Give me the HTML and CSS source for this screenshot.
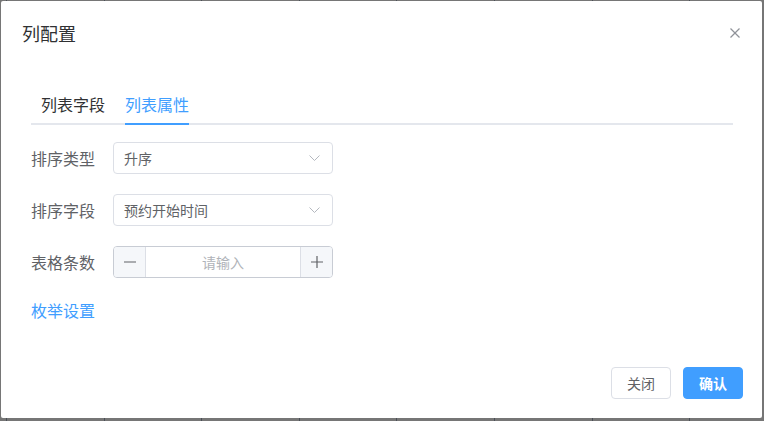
FILE: index.html
```html
<!DOCTYPE html>
<html lang="zh-CN">
<head>
    <meta charset="UTF-8">
    <title>列配置</title>
    <link rel="stylesheet" href="styles.css">
</head>
<body>
    <div class="dialog">
        <div class="dialog-header">
            <span class="dialog-title">列配置</span>
            <button class="dialog-close" aria-label="关闭">
                <svg width="10" height="10" viewBox="0 0 10 10">
                    <line x1="0.5" y1="0.5" x2="9.5" y2="9.5"></line>
                    <line x1="9.5" y1="0.5" x2="0.5" y2="9.5"></line>
                </svg>
            </button>
        </div>

        <div class="dialog-body">
            <div class="tabs">
                <div class="tab">列表字段</div>
                <div class="tab active">列表属性</div>
            </div>

            <div class="form">
                <div class="form-item">
                    <label>排序类型</label>
                    <div class="select">
                        <span>升序</span>
                        <svg class="arrow" width="11" height="6" viewBox="0 0 11 6"><polyline points="0.5,0.5 5.5,5.5 10.5,0.5"></polyline></svg>
                    </div>
                </div>
                <div class="form-item">
                    <label>排序字段</label>
                    <div class="select">
                        <span>预约开始时间</span>
                        <svg class="arrow" width="11" height="6" viewBox="0 0 11 6"><polyline points="0.5,0.5 5.5,5.5 10.5,0.5"></polyline></svg>
                    </div>
                </div>
                <div class="form-item">
                    <label>表格条数</label>
                    <div class="input-number">
                        <span class="step">
                            <svg width="12" height="12" viewBox="0 0 12 12"><line x1="0" y1="6" x2="12" y2="6"></line></svg>
                        </span>
                        <input type="text" placeholder="请输入">
                        <span class="step">
                            <svg width="12" height="12" viewBox="0 0 12 12"><line x1="0" y1="6" x2="12" y2="6"></line><line x1="6" y1="0" x2="6" y2="12"></line></svg>
                        </span>
                    </div>
                </div>
                <a class="link" href="#">枚举设置</a>
            </div>
        </div>

        <div class="dialog-footer">
            <button class="btn">关闭</button>
            <button class="btn primary">确认</button>
        </div>
    </div>
</body>
</html>
```

FILE: styles.css
```css
:root {
    --primary: #409eff;
    --text: #303133;
    --regular: #606266;
    --border: #dcdfe6;
}

* {
    box-sizing: border-box;
}

body {
    margin: 0;
    width: 764px;
    height: 421px;
    overflow: hidden;
    font-family: "Noto Sans CJK SC", "Noto Sans", sans-serif;
    background: #767676 repeating-linear-gradient(90deg, transparent 0, transparent 6px, #4a4f57 6px, #4a4f57 7px, transparent 7px, transparent 97.6px);
    padding: 1px 2px 3px 1px;
}

.dialog {
    background: #fff;
    height: 417px;
    display: flex;
    flex-direction: column;
    border-radius: 2px;
}

.dialog-header {
    padding: 20px 20px 10px 21px;
    display: flex;
    justify-content: space-between;
    align-items: center;
}

.dialog-title {
    font-size: 18px;
    line-height: 24px;
    color: var(--text);
}

.dialog-close {
    border: none;
    background: none;
    padding: 0;
    margin-right: 2px;
    width: 10px;
    height: 10px;
    display: flex;
}

.dialog-close svg line {
    stroke: #909399;
    stroke-width: 1.2;
}

.dialog-body {
    padding: 30px 29px 0 30px;
    flex: 1;
}

.tabs {
    display: flex;
    gap: 20px;
    padding-left: 10px;
    border-bottom: 2px solid #e4e7ed;
    height: 40px;
}

.tab {
    font-size: 16px;
    line-height: 38px;
    color: var(--text);
    position: relative;
}

.tab.active {
    color: var(--primary);
}

.tab.active::after {
    content: "";
    position: absolute;
    left: 0;
    right: 0;
    bottom: -2px;
    height: 2px;
    background: var(--primary);
}

.form {
    margin-top: 17px;
}

.form-item {
    display: flex;
    align-items: center;
    margin-bottom: 20px;
}

.form-item label {
    width: 82px;
    font-size: 16px;
    color: var(--regular);
}

.select {
    width: 220px;
    height: 32px;
    border: 1px solid var(--border);
    border-radius: 4px;
    display: flex;
    align-items: center;
    justify-content: space-between;
    padding: 0 12px 0 10px;
    font-size: 14px;
    color: var(--regular);
}

.arrow polyline {
    fill: none;
    stroke: #b4b8bf;
    stroke-width: 1;
}

.input-number {
    width: 220px;
    height: 32px;
    border: 1px solid #c8ccd4;
    border-radius: 4px;
    display: flex;
    overflow: hidden;
}

.input-number .step {
    width: 32px;
    background: #f5f7fa;
    display: flex;
    align-items: center;
    justify-content: center;
}

.input-number .step:first-child {
    border-right: 1px solid var(--border);
}

.input-number .step:last-child {
    border-left: 1px solid var(--border);
}

.step svg line {
    stroke: #606266;
    stroke-width: 1.2;
}

.input-number input {
    flex: 1;
    min-width: 0;
    border: none;
    outline: none;
    text-align: center;
    font-family: inherit;
    font-size: 14px;
    color: var(--regular);
}

.input-number input::placeholder {
    color: #b0b3b9;
}

.link {
    display: inline-block;
    font-size: 16px;
    line-height: 22px;
    color: var(--primary);
    text-decoration: none;
}

.dialog-footer {
    display: flex;
    justify-content: flex-end;
    gap: 12px;
    padding: 0 19px 19px 20px;
}

.btn {
    height: 32px;
    padding: 0 15px;
    font-family: inherit;
    font-size: 14px;
    border-radius: 4px;
    border: 1px solid var(--border);
    background: #fff;
    color: var(--regular);
    cursor: pointer;
}

.btn.primary {
    background: var(--primary);
    border-color: var(--primary);
    color: #fff;
    font-weight: bold;
}
```
